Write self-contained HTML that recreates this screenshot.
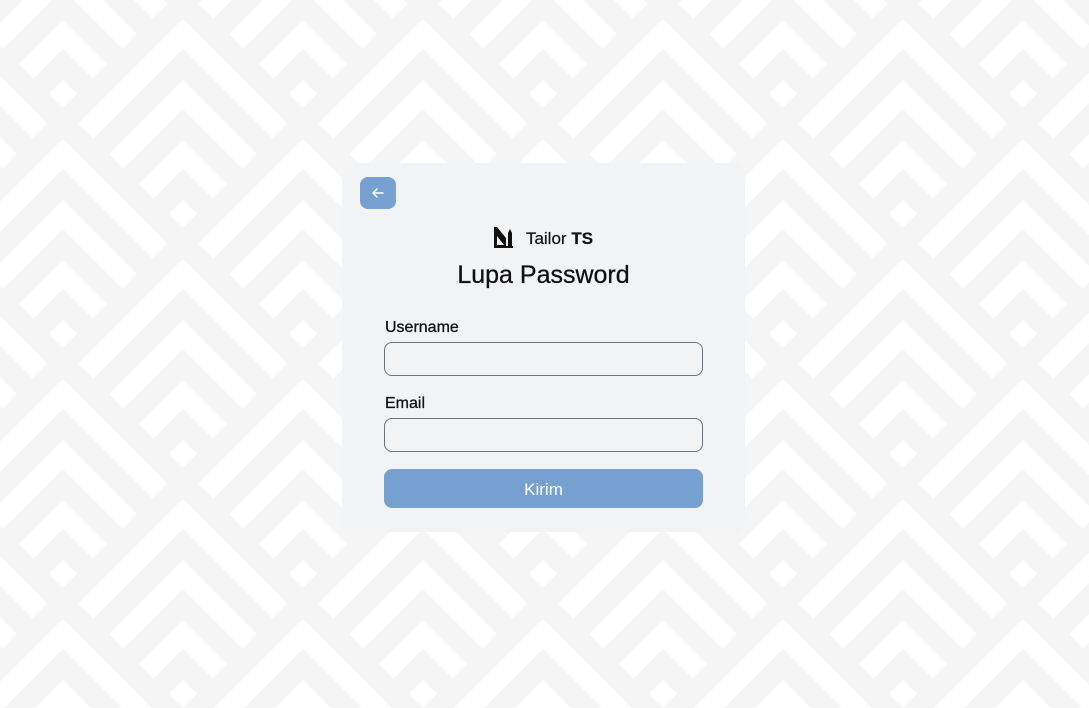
<!DOCTYPE html>
<html><head><meta charset="utf-8"><style>
html,body{margin:0;padding:0;width:1089px;height:708px;overflow:hidden;background:#f5f5f5;font-family:"Liberation Sans",sans-serif}
svg.bg{position:absolute;left:0;top:0}
.card{position:absolute;left:342px;top:163px;width:403px;height:369px;background:#f2f3f5;border-radius:10px}
.back{position:absolute;left:18px;top:14px;width:36px;height:32px;background:#76a0cf;border-radius:8px}
.brand{position:absolute;left:0;width:403px;top:66px;text-align:center;font-size:17px;color:#111;-webkit-text-stroke:0.2px #111}
.title{position:absolute;left:0;width:403px;top:98px;text-align:center;font-size:25px;color:#111;-webkit-text-stroke:0.3px #111}
.lbl{position:absolute;left:43px;font-size:16px;color:#111;-webkit-text-stroke:0.3px #111}
.inp{position:absolute;left:42px;width:317px;height:32px;border:1px solid #6b7280;border-radius:8px;background:#f2f3f5}
.btn{position:absolute;left:42px;top:306px;width:319px;height:39px;background:#76a0cf;border-radius:8px;color:#fff;font-size:17px;text-align:center;line-height:41px}
</style></head><body>
<svg class="bg" width="1089" height="708" viewBox="0 0 1089 708">
<defs>
<clipPath id="v" clipPathUnits="userSpaceOnUse"><path d="M0,14L-320,-306L320,-306Z"/></clipPath>
<g id="c">
<path clip-path="url(#v)" fill="#fff" fill-rule="evenodd" d="M0,-14L14,0L0,14L-14,0Z M0,-74L74,0L0,74L-74,0Z M0,-45L45,0L0,45L-45,0Z M0,-134L134,0L0,134L-134,0Z M0,-105L105,0L0,105L-105,0Z M0,-195L195,0L0,195L-195,0Z M0,-165L165,0L0,165L-165,0Z"/>
</g>
</defs>
<use href="#c" x="-177" y="-146"/><use href="#c" x="63" y="-146"/><use href="#c" x="303" y="-146"/><use href="#c" x="543" y="-146"/><use href="#c" x="783" y="-146"/><use href="#c" x="1023" y="-146"/><use href="#c" x="1263" y="-146"/>
<use href="#c" x="-57" y="-26"/><use href="#c" x="183" y="-26"/><use href="#c" x="423" y="-26"/><use href="#c" x="663" y="-26"/><use href="#c" x="903" y="-26"/><use href="#c" x="1143" y="-26"/>
<use href="#c" x="-177" y="94"/><use href="#c" x="63" y="94"/><use href="#c" x="303" y="94"/><use href="#c" x="543" y="94"/><use href="#c" x="783" y="94"/><use href="#c" x="1023" y="94"/><use href="#c" x="1263" y="94"/>
<use href="#c" x="-57" y="214"/><use href="#c" x="183" y="214"/><use href="#c" x="423" y="214"/><use href="#c" x="663" y="214"/><use href="#c" x="903" y="214"/><use href="#c" x="1143" y="214"/>
<use href="#c" x="-177" y="334"/><use href="#c" x="63" y="334"/><use href="#c" x="303" y="334"/><use href="#c" x="543" y="334"/><use href="#c" x="783" y="334"/><use href="#c" x="1023" y="334"/><use href="#c" x="1263" y="334"/>
<use href="#c" x="-57" y="454"/><use href="#c" x="183" y="454"/><use href="#c" x="423" y="454"/><use href="#c" x="663" y="454"/><use href="#c" x="903" y="454"/><use href="#c" x="1143" y="454"/>
<use href="#c" x="-177" y="574"/><use href="#c" x="63" y="574"/><use href="#c" x="303" y="574"/><use href="#c" x="543" y="574"/><use href="#c" x="783" y="574"/><use href="#c" x="1023" y="574"/><use href="#c" x="1263" y="574"/>
<use href="#c" x="-57" y="694"/><use href="#c" x="183" y="694"/><use href="#c" x="423" y="694"/><use href="#c" x="663" y="694"/><use href="#c" x="903" y="694"/><use href="#c" x="1143" y="694"/>
<use href="#c" x="-177" y="814"/><use href="#c" x="63" y="814"/><use href="#c" x="303" y="814"/><use href="#c" x="543" y="814"/><use href="#c" x="783" y="814"/><use href="#c" x="1023" y="814"/><use href="#c" x="1263" y="814"/>
<use href="#c" x="-57" y="934"/><use href="#c" x="183" y="934"/><use href="#c" x="423" y="934"/><use href="#c" x="663" y="934"/><use href="#c" x="903" y="934"/><use href="#c" x="1143" y="934"/>
</svg>
<div class="card">
 <div class="back"><svg width="36" height="32" viewBox="0 0 36 32"><path d="M23 16H13M17 12L13 16L17 20" stroke="#fff" stroke-width="1.5" fill="none" stroke-linecap="round" stroke-linejoin="round"/></svg></div>
 <svg style="position:absolute;left:152px;top:64px" width="21" height="22" viewBox="0 0 21 22"><path d="M0 0H3L12 11V19H14V6L16 2L18 6V19H19V21H0Z M3 9V18H10Z" fill="#111" fill-rule="evenodd"/></svg>
 <div class="brand" style="padding-left:32px;box-sizing:border-box">Tailor <b>TS</b></div>
 <div class="title">Lupa Password</div>
 <div class="lbl" style="top:156px">Username</div>
 <div class="inp" style="top:179px"></div>
 <div class="lbl" style="top:232px">Email</div>
 <div class="inp" style="top:255px"></div>
 <div class="btn">Kirim</div>
</div>
</body></html>
